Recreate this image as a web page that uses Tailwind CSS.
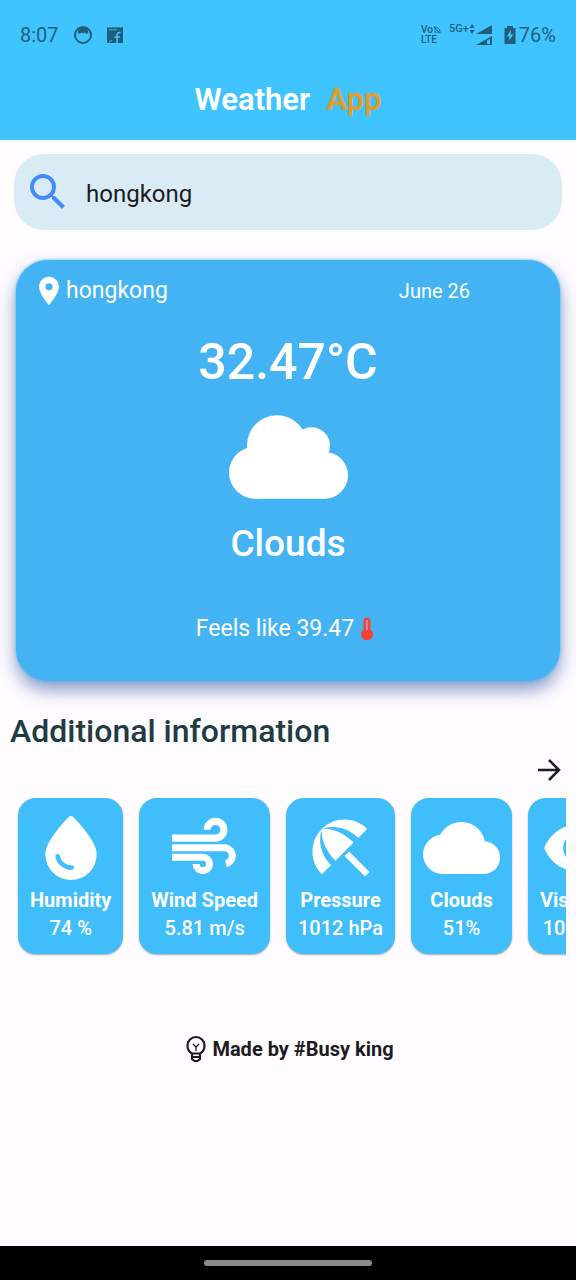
<!DOCTYPE html>
<html lang="en">
<head>
<meta charset="utf-8">
<meta name="viewport" content="width=device-width, initial-scale=1">
<title>Weather App</title>
<script src="https://cdn.jsdelivr.net/npm/@tailwindcss/browser@4"></script>
</head>
<body class="flex min-h-screen flex-col bg-[#fffcff] font-['Roboto',sans-serif] text-[#1c1b1f]">

<header class="bg-[#40c4ff] pb-5">
  <!-- Status bar -->
  <div class="flex h-[70px] items-center justify-between px-5 text-[#1f5f7c]">
    <div class="flex items-center gap-3.5 text-[20px]">
      <span>8:07</span>
      <svg class="h-5 w-5" viewBox="0 0 20 20" fill="none" stroke="currentColor" stroke-width="2"><circle cx="10" cy="10" r="8"/><path d="M5.500 3h9l.8 5-2.300 1-1-1.500-2 .8-2-.8L7 9 4.700 8z" fill="currentColor" stroke="none"/></svg>
      <svg class="-ml-0.5 h-5 w-5" viewBox="0 0 20 20"><path fill="currentColor" d="M2 2l1.500.8L5 2l1.500.8L8 2l1.500.8L11 2l1.500.8L14 2l1.500.8L17 2l1 .5V18H2z"/><path d="M15.500 7.500c-2.500-.3-3.500.7-3.500 3V18M9.500 12h5.500" fill="none" stroke="#40c4ff" stroke-width="1.600"/><path d="M4 4.800h8M4 17l3-2" stroke="#40c4ff" stroke-width=".8"/></svg>
    </div>
    <div class="flex items-center">
      <div class="text-[10px] leading-[10px] font-medium">
        <div class="flex items-center">Vo<svg class="h-2 w-2" viewBox="0 0 8 8" fill="none" stroke="currentColor"><path d="M1 1c4 0 6 2 6 6M1 3c2.500 0 4 1.500 4 4M1 5c1.200 0 2 .8 2 2M1 1l6 6"/></svg></div>
        <div>LTE</div>
      </div>
      <span class="mb-3 ml-2 text-[11px] leading-3 font-medium">5G+</span>
      <svg class="mb-3 h-2.5 w-1.5" viewBox="0 0 6 10" fill="currentColor"><path d="M3 0l2.500 4h-5zM3 10L.5 6h5z"/></svg>
      <svg class="h-6 w-[18px]" viewBox="0 0 18 24"><path fill="currentColor" d="M1 11L17 2v9zM1 22l16-9v9z"/><path d="M12 17.500l3-1.700V21h-3z" fill="#40c4ff"/></svg>
      <svg class="ml-2.5 h-5 w-3.5" viewBox="0 0 14 20"><path fill="currentColor" d="M4 1h6v2h2.500v16h-11V3H4z"/><path fill="#40c4ff" d="M7.800 5L4 11.500h2.300V16L10 9.500H7.800z"/></svg>
      <span class="ml-0.5 text-[20px]">76%</span>
    </div>
  </div>
  <h1 class="flex h-[50px] items-center justify-center gap-4 pt-2.5 text-[31px] font-semibold text-white">
    <span>Weather</span><span class="text-[#e29c2a]">App</span>
  </h1>
</header>

<main class="flex flex-col">
  <form class="mx-3.5 mt-3.5 flex h-[76px] items-center rounded-[30px] bg-[#d9ebf5] pl-2.5">
    <label for="city" aria-label="Search city">
      <svg class="h-12 w-12" viewBox="0 0 24 24" fill="#448aff"><path d="M15.500 14h-.79l-.28-.27A6.471 6.471 0 0016 9.500 6.500 6.500 0 109.500 16c1.610 0 3.090-.59 4.230-1.570l.27.28v.79l5 4.990L20.490 19l-4.990-5zm-6 0C7.010 14 5 11.990 5 9.500S7.010 5 9.500 5 14 7.010 14 9.500 11.990 14 9.500 14z"/></svg>
    </label>
    <input id="city" type="text" value="hongkong" class="ml-3.5 min-w-0 flex-1 bg-transparent pt-1 text-[24px] outline-none">
  </form>

  <section class="mx-4 mt-[30px] flex flex-col items-center rounded-[32px] bg-[#44b3f3] pb-9 text-white shadow-[0_0_3px_#44b3f3,0_9px_18px_#3f5fa8a0]">
    <div class="flex w-full items-center justify-between pt-3.5 pr-[90px] pl-4">
      <div class="flex items-center">
        <svg class="h-[34px] w-[34px]" viewBox="0 0 24 24" fill="currentColor"><path d="M12 2C8.130 2 5 5.130 5 9c0 5.250 7 13 7 13s7-7.750 7-13c0-3.870-3.130-7-7-7zm0 9.500a2.500 2.500 0 010-5 2.500 2.500 0 010 5z"/></svg>
        <span class="text-[23px] leading-8">hongkong</span>
      </div>
      <span class="text-[20px] leading-8">June 26</span>
    </div>
    <p class="mt-6 text-[50px] leading-[60px] font-medium">32.47°C</p>
    <svg class="mt-[23px] h-[84px] w-[119px]" viewBox="0 0 357 250" fill="currentColor"><circle cx="144" cy="90" r="90"/><circle cx="248" cy="91" r="55"/><circle cx="78" cy="172" r="78"/><circle cx="287" cy="180" r="70"/><path d="M78 100h209v150H78z"/></svg>
    <p class="mt-[25px] text-[37px] leading-10 font-medium">Clouds</p>
    <p class="mt-[49px] flex items-center gap-1.5 pr-1.5 text-[23px] leading-8"><span>Feels like 39.47</span>
      <svg class="h-6 w-3.5" viewBox="0 0 14 24"><path d="M3.500 4a3.500 3.500 0 017 0v8.500a6 6 0 11-7 0z" fill="#f44336"/><path d="M7 3v10" stroke="#c98a9c" stroke-width="2"/></svg>
    </p>
  </section>

  <h2 class="mt-[30px] ml-2.5 text-[32px] leading-10 font-medium text-[#1f3b43]">Additional information</h2>
  <button type="button" aria-label="Show more" class="mt-1 mr-3 self-end">
    <svg class="h-[30px] w-[30px]" viewBox="0 0 30 30" fill="none" stroke="#1c1b1f" stroke-width="2.500"><path d="M4 15h21M15 5l10 10-10 10"/></svg>
  </button>

  <ul class="mx-2.5 flex gap-4 overflow-hidden pt-[13px] pb-1 pl-2 text-center text-[20px] leading-7 text-white">
    <li class="flex shrink-0 flex-col items-center rounded-[18px] bg-[#40bdfb] p-3 shadow-[0_1px_2px_#0005]">
      <svg class="h-[76px] w-[52px] py-1.5" viewBox="0 0 154 192"><path fill="#fff" d="M70 3Q77-3 84 3C110 30 154 80 154 115A77 77 0 010 115C0 80 44 30 70 3z"/><path d="M37 121A42 42 0 0079 155" fill="none" stroke="#40bdfb" stroke-width="14" stroke-linecap="round"/></svg>
      <b>Humidity</b><span class="font-medium">74 %</span>
    </li>
    <li class="flex shrink-0 flex-col items-center rounded-[18px] bg-[#40bdfb] p-3 shadow-[0_1px_2px_#0005]">
      <svg class="h-[76px] w-[65px] pb-1" viewBox="0 0 194 167" fill="none" stroke="#fff" stroke-width="21"><path d="M0 60H130A25 25 0 10105 35M0 89H161A24 24 0 01161 136M0 117H92A20 20 0 1172 137"/></svg>
      <b>Wind Speed</b><span class="font-medium">5.81 m/s</span>
    </li>
    <li class="flex shrink-0 flex-col items-center rounded-[18px] bg-[#40bdfb] p-3 shadow-[0_1px_2px_#0005]">
      <svg class="h-[76px] w-[76px]" viewBox="0 0 24 24" fill="currentColor"><path d="M13.127 14.560l1.430-1.430 6.440 6.443L19.570 21zm4.293-5.730l2.860-2.860c-3.950-3.950-10.350-3.960-14.300-.02 3.930-1.300 8.310-.25 11.440 2.880zM5.950 5.980c-3.940 3.950-3.930 10.350.02 14.300l2.860-2.860C5.700 14.290 4.650 9.910 5.950 5.980zm.02-.02l-.01.01c-.38 3.010 1.170 6.880 4.300 10.020l5.730-5.730c-3.130-3.130-7.010-4.680-10.020-4.300z"/></svg>
      <b>Pressure</b><span class="font-medium">1012 hPa</span>
    </li>
    <li class="flex shrink-0 flex-col items-center rounded-[18px] bg-[#40bdfb] p-3 shadow-[0_1px_2px_#0005]">
      <svg class="h-[76px] w-[77px]" viewBox="0 0 231 156" fill="currentColor"><circle cx="115" cy="72" r="72"/><circle cx="59" cy="97" r="59"/><circle cx="182" cy="107" r="49"/><path d="M59 90h123v66H59z"/></svg>
      <b>Clouds</b><span class="font-medium">51%</span>
    </li>
    <li class="flex shrink-0 flex-col items-center rounded-[18px] bg-[#40bdfb] p-3 shadow-[0_1px_2px_#0005]">
      <svg class="h-[76px] w-[76px]" viewBox="0 0 24 24" fill="currentColor"><path d="M12 4.500C7 4.500 2.730 7.610 1 12c1.730 4.390 6 7.500 11 7.500s9.270-3.110 11-7.500c-1.730-4.390-6-7.500-11-7.500zM12 17c-2.760 0-5-2.240-5-5s2.240-5 5-5 5 2.240 5 5-2.240 5-5 5zm0-8a3 3 0 100 6 3 3 0 000-6z"/></svg>
      <b>Visibility</b><span class="font-medium">10.0 km</span>
    </li>
  </ul>

  <p class="mt-[75px] flex items-center justify-center gap-1.5 pl-1 text-[20px] leading-8 font-bold">
    <svg class="h-7 w-5" viewBox="0 0 20 28" fill="none" stroke="currentColor" stroke-width="2.200"><path d="M6 18.500C3 17 1.500 14 1.500 10.500a8.500 8.500 0 0117 0C18.500 14 17 17 14 18.500V24l-2.500 2h-3L6 24zM6 18.500h8M6 22h8"/><path d="M7 9l3 3 3-3M10 12v4" stroke-width="1.300"/></svg>
    <span>Made by #Busy king</span>
  </p>
</main>

<footer class="mt-auto flex h-[34px] items-center justify-center bg-black">
  <div class="h-1.5 w-[168px] rounded-full bg-[#8c8c8c]"></div>
</footer>
</body>
</html>
